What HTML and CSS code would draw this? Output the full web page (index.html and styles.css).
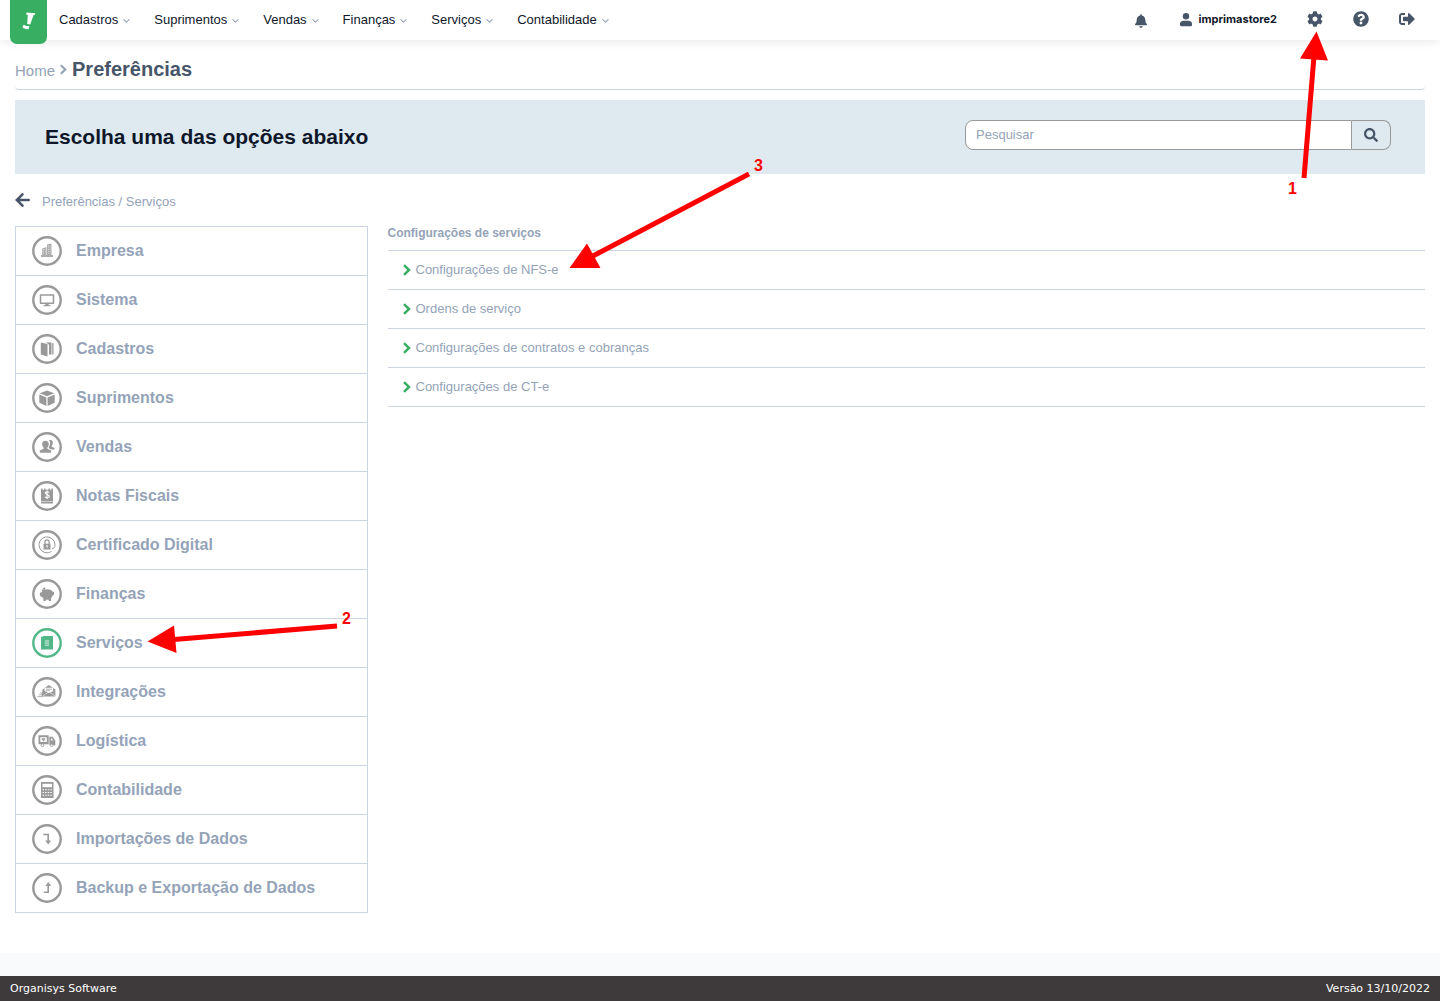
FILE: index.html
```html
<!DOCTYPE html>
<html lang="pt-BR">
<head>
<meta charset="utf-8">
<meta name="viewport" content="width=device-width, initial-scale=1">
<title>Preferências</title>
<link rel="stylesheet" href="styles.css">
</head>
<body>
<svg class="sprite" aria-hidden="true">
  <symbol id="down" viewBox="0 0 8 6"><path d="M1 1.5 4 4.5 7 1.5" fill="none" stroke="currentColor" stroke-width="1.3" stroke-linecap="round"/></symbol>
  <symbol id="next" viewBox="0 0 8 12"><path d="M1 1.2 6 6 1 10.8" fill="none" stroke="currentColor" stroke-width="2.5"/></symbol>
</svg>

<header class="topbar">
  <a class="logo" href="#" aria-label="Início">
    <svg width="14" height="18" viewBox="0 0 14 18" fill="#fff"><path d="M4.400.6 13.200 1.300 12.700 2.900 11.600 3.100 8.200 12.400 5.200 12.100 5.800 3 4.200 2.400Z"/><path d="M.9 13.200 2.500 13.100 4 14 7.300 14 6.800 17 4.200 17.200.7 15.800Z"/></svg>
  </a>
  <nav class="menu" aria-label="Principal">
    <a href="#">Cadastros <svg class="down"><use href="#down"/></svg></a>
    <a href="#">Suprimentos <svg class="down"><use href="#down"/></svg></a>
    <a href="#">Vendas <svg class="down"><use href="#down"/></svg></a>
    <a href="#">Finanças <svg class="down"><use href="#down"/></svg></a>
    <a href="#">Serviços <svg class="down"><use href="#down"/></svg></a>
    <a href="#">Contabilidade <svg class="down"><use href="#down"/></svg></a>
  </nav>
  <div class="tools">
    <button type="button" class="bell" aria-label="Notificações"><svg width="12" height="14" viewBox="0 0 448 512" fill="currentColor"><path d="M224 512c35.3 0 64-28.600 64-64H160c0 35.400 28.600 64 64 64zm215.400-149.700c-19.300-20.800-55.500-52-55.500-154.300 0-77.700-54.500-139.900-127.900-155.200V32c0-17.700-14.300-32-32-32s-32 14.300-32 32v20.800C118.600 68.100 64.100 130.300 64.100 208c0 102.300-36.200 133.500-55.500 154.300-6 6.400-8.700 14.200-8.600 21.700.1 16.400 13 32 32.100 32h383.800c19.100 0 32-15.600 32.100-32 0-7.500-2.600-15.300-8.600-21.700z"/></svg></button>
    <a class="user" href="#"><svg width="12" height="14" viewBox="0 0 12 14" fill="currentColor"><circle cx="6" cy="3.300" r="3.200"/><path d="M3.400 7.700h5.200C10.600 7.700 12 9 12 10.800v1.300c0 .7-.5 1.200-1.200 1.200H1.200C.5 13.300 0 12.800 0 12.100v-1.300C0 9 1.400 7.700 3.400 7.700Z"/></svg><span>imprimastore2</span></a>
    <button type="button" aria-label="Preferências"><svg width="16" height="16" viewBox="0 0 512 512" fill="currentColor"><path d="M487.400 315.700l-42.600-24.600c4.300-23.200 4.300-47 0-70.200l42.600-24.600c4.900-2.800 7.100-8.600 5.500-14-11.100-35.600-30-67.800-54.700-94.600-3.800-4.100-10-5.100-14.800-2.300L380.800 110c-17.900-15.400-38.500-27.300-60.800-35.100V25.800c0-5.600-3.900-10.500-9.400-11.700-36.700-8.200-74.300-7.800-109.200 0-5.500 1.200-9.400 6.100-9.400 11.700V75c-22.200 7.900-42.800 19.800-60.800 35.100L88.700 85.500c-4.900-2.800-11-1.900-14.800 2.300-24.700 26.700-43.600 58.900-54.700 94.600-1.700 5.400.6 11.200 5.500 14L67.300 221c-4.300 23.200-4.300 47 0 70.200l-42.600 24.600c-4.900 2.800-7.100 8.600-5.500 14 11.100 35.600 30 67.800 54.700 94.600 3.800 4.100 10 5.100 14.800 2.300l42.600-24.600c17.900 15.400 38.500 27.300 60.800 35.100v49.200c0 5.600 3.900 10.500 9.400 11.700 36.700 8.200 74.300 7.800 109.200 0 5.500-1.200 9.400-6.100 9.400-11.700v-49.200c22.200-7.900 42.800-19.800 60.800-35.100l42.600 24.600c4.900 2.800 11 1.900 14.800-2.300 24.700-26.700 43.600-58.900 54.700-94.600 1.500-5.500-.7-11.300-5.600-14.100zM256 336c-44.100 0-80-35.900-80-80s35.900-80 80-80 80 35.900 80 80-35.900 80-80 80z"/></svg></button>
    <button type="button" aria-label="Ajuda"><svg width="16" height="16" viewBox="0 0 512 512" fill="currentColor"><path d="M504 256c0 137-111 248-248 248S8 393 8 256C8 119.100 119 8 256 8s248 111.100 248 248zM262.700 90c-54.500 0-89.300 23-116.600 63.800-3.500 5.300-2.400 12.400 2.700 16.200l34.700 26.300c5.200 4 12.600 3 16.700-2.100 17.900-22.700 30.100-35.800 57.300-35.800 20.400 0 45.700 13.100 45.700 33 0 15-12.400 22.700-32.500 34C247.100 238.500 216 254.900 216 296v4c0 6.600 5.400 12 12 12h56c6.600 0 12-5.400 12-12v-1.300c0-28.500 83.200-29.700 83.200-106.700 0-58-60.200-102-116.500-102zM256 338c-25.400 0-46 20.600-46 46s20.600 46 46 46 46-20.600 46-46-20.600-46-46-46z"/></svg></button>
    <button type="button" aria-label="Sair"><svg width="16" height="16" viewBox="0 0 512 512" fill="currentColor"><path d="M497 273L329 441c-15 15-41 4.500-41-17v-96H152c-13.300 0-24-10.700-24-24v-96c0-13.300 10.700-24 24-24h136V88c0-21.400 25.900-32 41-17l168 168c9.300 9.400 9.300 24.600 0 34zM192 436v-40c0-6.600-5.400-12-12-12H96c-17.700 0-32-14.300-32-32V160c0-17.700 14.300-32 32-32h84c6.600 0 12-5.400 12-12V76c0-6.600-5.400-12-12-12H96c-53 0-96 43-96 96v192c0 53 43 96 96 96h84c6.600 0 12-5.400 12-12z"/></svg></button>
  </div>
</header>

<main class="page">
  <div class="crumbs">
    <a href="#">Home</a>
    <svg class="next"><use href="#next"/></svg>
    <h1>Preferências</h1>
  </div>

  <section class="banner">
    <h2>Escolha uma das opções abaixo</h2>
    <form class="search" role="search">
      <input type="text" placeholder="Pesquisar" aria-label="Pesquisar">
      <button type="button" aria-label="Buscar"><svg width="14" height="14" viewBox="0 0 512 512" fill="currentColor"><path d="M505 442.700L405.300 343c-4.500-4.500-10.600-7-17-7H372c27.600-35.300 44-79.700 44-128C416 93.100 322.900 0 208 0S0 93.100 0 208s93.100 208 208 208c48.300 0 92.700-16.400 128-44v16.300c0 6.400 2.500 12.500 7 17l99.700 99.700c9.400 9.400 24.600 9.400 33.900 0l28.300-28.300c9.400-9.400 9.400-24.600.1-34zM208 336c-70.700 0-128-57.200-128-128 0-70.700 57.200-128 128-128 70.700 0 128 57.200 128 128 0 70.700-57.200 128-128 128z"/></svg></button>
    </form>
  </section>

  <div class="path">
    <a href="#" aria-label="Voltar"><svg width="15" height="14" viewBox="0 0 15 14" fill="none" stroke="currentColor" stroke-width="2.500" stroke-linecap="round"><path d="M7.500 1.300 1.800 7l5.700 5.700M2.300 7h11.400"/></svg></a>
    <span>Preferências / Serviços</span>
  </div>

  <div class="columns">
    <ul class="sections">
      <li><a href="#"><svg class="ring" viewBox="0 0 30 30"><circle class="edge" cx="15" cy="15" r="13.700"/><path d="M9 19h12v2H9zM10.200 12.500l4.300-1.500v8h-4.300zM15 8.500 19.500 7.500V19H15z" opacity=".8"/><path d="M11.500 13v5.500M13.200 13v5.500M16.500 9.500V18M18 9.500V18" stroke="#fff" stroke-width=".5" stroke-dasharray="1 .8"/></svg>Empresa</a></li>
      <li><a href="#"><svg class="ring" viewBox="0 0 30 30"><circle class="edge" cx="15" cy="15" r="13.700"/><path d="M8.500 10h13v8.300h-13z" fill="none" stroke="currentColor" stroke-width="1.500" stroke-linejoin="round"/><path d="M13.300 18.500h3.400v1.800h1.800v1h-7v-1h1.800z"/></svg>Sistema</a></li>
      <li><a href="#"><svg class="ring" viewBox="0 0 30 30"><circle class="edge" cx="15" cy="15" r="13.700"/><path d="M8.800 8.500 15.500 10v12.500L8.800 20.500zM14 8.300l5.500.3v12h-2.500v-9.800zM20.200 9h1.300v11.500h-1.300z"/></svg>Cadastros</a></li>
      <li><a href="#"><svg class="ring" viewBox="0 0 30 30"><circle class="edge" cx="15" cy="15" r="13.700"/><path d="m15 7.600 7.200 2.700-7.200 3-7.200-3zM7.300 11.500l7.100 2.900V23l-7.100-3.300zM22.700 11.500l-7.100 2.900V23l7.100-3.300z"/></svg>Suprimentos</a></li>
      <li><a href="#"><svg class="ring" viewBox="0 0 30 30"><circle class="edge" cx="15" cy="15" r="13.700"/><path d="M13.500 8.800c2.200 0 3.300 1.300 3.300 3.300 0 1.400-.6 2.700-1.500 3.600v1.100l3.800 1.700v2.200H7.800v-2.200l3.800-1.700v-1.100c-.9-.9-1.500-2.200-1.500-3.600 0-2 1.200-3.300 3.400-3.300ZM17 8.300c2.800-1 4.200.9 3.800 3.300-.1 1-.6 1.700-1.100 2.200v1l2.800 1.300v1.500h-3.200l-2.500-1.400v-1.300c1.800-2.300 1.700-5 .2-6.600Z"/></svg>Vendas</a></li>
      <li><a href="#"><svg class="ring" viewBox="0 0 30 30"><circle class="edge" cx="15" cy="15" r="13.700"/><path d="M9 7.500h1.500v1.200H12V7.500h1.500v1.200h3V7.500H18v1.200h1.500V7.500H21V20H9zM9 20.500h12v1.900H9z"/><path d="M17.300 11.300c-1-.9-4-.9-4 .7s4 1.300 4 3.200-3 1.900-4.400.7M15.100 9.600v8.400" fill="none" stroke="#fff" stroke-width="1.100"/></svg>Notas Fiscais</a></li>
      <li><a href="#"><svg class="ring" viewBox="0 0 30 30"><circle class="edge" cx="15" cy="15" r="13.700"/><path d="M19.500 21.500A8 8 0 1 1 23 15c0 2.500-1.200 3.500-3 3.500" fill="none" stroke="currentColor" stroke-width="1"/><path d="M11.500 13.700h7V19.500h-7z"/><path d="M12.900 14v-2a2.100 2.100 0 0 1 4.200 0v2" fill="none" stroke="currentColor" stroke-width="1.200"/><path d="M14.500 15h1.100v2.500h-1.100z" fill="#fff"/></svg>Certificado Digital</a></li>
      <li><a href="#"><svg class="ring" viewBox="0 0 30 30"><circle class="edge" cx="15" cy="15" r="13.700"/><path d="M7.900 14 10 12.700l-.2-2.400 2.300.9c2.500-1.600 6.700-1.100 8.400 1.300l1.500.6v2.700l-1.300.5c-.2 1.200-.9 2.200-1.700 2.900v2.700h-2.300v-1.200h-2.900v1.200h-2.400v-2.400l-1.700-1.700-1.800-.7z"/><circle cx="12.200" cy="9.700" r="1.200"/></svg>Finanças</a></li>
      <li class="active"><a href="#" aria-current="page"><svg class="ring" viewBox="0 0 30 30"><circle class="edge" cx="15" cy="15" r="13.700"/><path d="M9 8.800h1.500l1-.9h9.500v13.600H9z"/><path d="M12.800 13h4.300M12.800 15.100h4.300M12.800 17.200h4.300" stroke="#fff" stroke-width=".8"/></svg>Serviços</a></li>
      <li><a href="#"><svg class="ring" viewBox="0 0 30 30"><circle class="edge" cx="15" cy="15" r="13.700"/><path d="M10.500 12.500 16.800 8l6.600 4.500v7H9.800z"/><path d="M12.500 10.800h8.600v3.400L16.800 16l-4.300-2z" fill="#fff"/><path d="M13.800 12.200h6M13.800 13.800h4M5.500 19.600h5M7 17.800h4M8 16h3" stroke="currentColor" stroke-width=".8"/><path d="m11 19 5-3.700h2l5 3.700" fill="none" stroke="#fff" stroke-width=".6"/></svg>Integrações</a></li>
      <li><a href="#"><svg class="ring" viewBox="0 0 30 30"><circle class="edge" cx="15" cy="15" r="13.700"/><path d="M6.500 9.300h10.200v9H6.500zM17.300 10.800h3.200l2.800 3.700v4.800h-6z"/><path d="M8.300 11.200h6.500v4.700H8.300z" fill="#fff"/><path d="m9.500 12.800 1-.8 1 .5 1-.5 1 .8-2 2.600z"/><path d="M18.900 12.400h1l1.300 2h-2.300z" fill="#fff"/><circle cx="10.500" cy="19.300" r="1.300" fill="#fff" stroke="currentColor" stroke-width=".9"/><circle cx="19.700" cy="19.300" r="1.300" fill="#fff" stroke="currentColor" stroke-width=".9"/></svg>Logística</a></li>
      <li><a href="#"><svg class="ring" viewBox="0 0 30 30"><circle class="edge" cx="15" cy="15" r="13.700"/><path d="M9 7h12.500v16H9z"/><path d="M10.500 8.800h9.500v3.400h-9.500z" fill="#fff"/><path d="M10.500 14.800h9.500M10.500 17.500h9.500M10.500 20.200h9.500" stroke="#fff" stroke-width="1" stroke-dasharray="1.500 1.100"/></svg>Contabilidade</a></li>
      <li><a href="#"><svg class="ring" viewBox="0 0 30 30"><circle class="edge" cx="15" cy="15" r="13.700"/><path d="M11.300 10.500h4.900v7" fill="none" stroke="currentColor" stroke-width="1.600"/><path d="M13.300 16.500h5.800l-2.900 4z"/></svg>Importações de Dados</a></li>
      <li><a href="#"><svg class="ring" viewBox="0 0 30 30"><circle class="edge" cx="15" cy="15" r="13.700"/><path d="M11.800 19.300h4.400v-7" fill="none" stroke="currentColor" stroke-width="1.600"/><path d="M13.300 13h5.800l-2.900-4z"/></svg>Backup e Exportação de Dados</a></li>
    </ul>

    <section class="options">
      <h3>Configurações de serviços</h3>
      <ul>
        <li><a href="#"><svg class="next"><use href="#next"/></svg>Configurações de NFS-e</a></li>
        <li><a href="#"><svg class="next"><use href="#next"/></svg>Ordens de serviço</a></li>
        <li><a href="#"><svg class="next"><use href="#next"/></svg>Configurações de contratos e cobranças</a></li>
        <li><a href="#"><svg class="next"><use href="#next"/></svg>Configurações de CT-e</a></li>
      </ul>
    </section>
  </div>
</main>

<footer class="footer">
  <span>Organisys Software</span>
  <span>Versão 13/10/2022</span>
</footer>

<div class="callout step-1">
  <svg width="40" height="150" viewBox="1290 30 40 150"><path d="M1304 178 1314 56" stroke="red" stroke-width="5"/><path d="M1316.500 31.500 1300 58.500l28 2z" fill="red"/></svg>
  <b>1</b>
</div>
<div class="callout step-2">
  <svg width="192" height="36" viewBox="147 620 192 36"><path d="M337 626 174 639.500" stroke="red" stroke-width="5"/><path d="M147.500 641.500 174 625.500l2.500 27.500z" fill="red"/></svg>
  <b>2</b>
</div>
<div class="callout step-3">
  <svg width="182" height="102" viewBox="568 170 182 102"><path d="M749 174 592 256.500" stroke="red" stroke-width="5"/><path d="M569.500 268 587 243.500 600.500 268z" fill="red"/></svg>
  <b>3</b>
</div>
</body>
</html>
```
FILE: styles.css
```css
* { box-sizing: border-box; }

body {
  position: relative;
  display: flex;
  flex-direction: column;
  min-height: 100vh;
  margin: 0;
  background: #f9fafc;
  color: #94a3b8;
  font: 13px/16px "Liberation Sans", Arial, sans-serif;
}

a { color: inherit; text-decoration: none; }
h1, h2, h3, ul { margin: 0; padding: 0; }
ul { list-style: none; }
svg { display: block; flex: none; }
button { padding: 0; border: 0; background: none; color: inherit; font: inherit; cursor: pointer; }
.sprite { position: absolute; width: 0; height: 0; }

/* Top bar */
.topbar {
  position: relative;
  display: flex;
  align-items: flex-start;
  height: 40px;
  padding: 0 25px 0 10px;
  background: #fff;
  box-shadow: 0 1px 10px rgba(0, 0, 0, .1);
}
.logo {
  display: flex;
  align-items: center;
  justify-content: center;
  width: 37px;
  height: 44px;
  padding-bottom: 2px;
  border-radius: 0 0 7px 7px;
  background: #37ae62;
}
.menu { display: flex; gap: 24px; padding: 12px; color: #0f172a; }
.menu a { display: flex; align-items: center; gap: 5px; }
.down { width: 7px; height: 6px; margin-top: 2px; color: #94a3b8; }
.tools {
  display: flex;
  align-items: center;
  gap: 30px;
  height: 38px;
  margin-left: auto;
  color: #475569;
}
.bell { padding-top: 3px; }
.user { display: flex; align-items: center; gap: 7px; margin-left: 3px; }
.user svg { margin-top: 2px; }
.user span { color: #0f172a; font: 700 11px/16px Inter, sans-serif; }

/* Page */
.page { flex: 1; padding: 0 15px 40px; background: #fff; }
.crumbs {
  display: flex;
  align-items: center;
  gap: 5px;
  height: 50px;
  padding-top: 8px;
  border-bottom: 1px solid #cbd5e1;
  border-radius: 4px;
}
.crumbs a { padding-top: 4px; font-size: 15px; }
.crumbs .next { width: 7px; height: 11px; margin-top: 2px; }
.crumbs h1 { color: #475569; font-size: 20px; line-height: 24px; }

.banner {
  display: flex;
  align-items: flex-start;
  justify-content: space-between;
  margin-top: 10px;
  padding: 20px 34px 24px 30px;
  background: #deeaf0;
}
.banner h2 { padding-top: 4px; color: #0f172a; font-size: 21px; line-height: 26px; }
.search { display: flex; flex: 0 1 426px; height: 30px; color: #475569; }
.search input {
  flex: 1;
  min-width: 0;
  padding: 0 10px;
  border: 1px solid #999;
  border-radius: 8px 0 0 8px;
  background: #fff;
  color: #475569;
  font: inherit;
}
.search input::placeholder { color: #94a3b8; opacity: 1; }
.search button {
  display: flex;
  align-items: center;
  justify-content: center;
  width: 39px;
  border: 1px solid #999;
  border-left: 0;
  border-radius: 0 8px 8px 0;
}

.path { display: flex; gap: 12px; padding: 19px 0 16px; }
.path a { color: #475569; }
.path span { padding-top: 1px; }

.columns { display: flex; align-items: flex-start; gap: 20px; }
.sections { flex: 0 0 25%; border: 1px solid #cbd5e1; border-bottom: 0; }
.sections a {
  display: flex;
  align-items: center;
  gap: 14px;
  height: 49px;
  padding-left: 16px;
  border-bottom: 1px solid #cbd5e1;
  font-size: 16px;
  font-weight: bold;
}
.ring { width: 30px; height: 30px; fill: currentColor; color: #999; }
.edge { fill: none; stroke: currentColor; stroke-width: 2.4px; }
.active .ring { color: #52b788; }

.options { flex: 1; }
.options h3 { padding-bottom: 10px; border-bottom: 1px solid #cbd5e1; font-size: 12px; line-height: 14px; }
.options a {
  display: flex;
  align-items: center;
  gap: 5px;
  height: 39px;
  padding-left: 15px;
  border-bottom: 1px solid #cbd5e1;
}
.options .next { width: 8px; height: 12px; color: #37ae62; }

/* Footer */
.footer {
  display: flex;
  align-items: center;
  justify-content: space-between;
  height: 25px;
  margin-top: 23px;
  padding: 1px 10px 0;
  background: #3e3a3b;
  color: #fff;
  font: 11px/14px "DejaVu Sans", Verdana, sans-serif;
}

/* Numbered step arrows laid over the page */
.callout { position: absolute; display: flex; color: red; font-size: 16px; line-height: 18px; pointer-events: none; }
.step-1 { top: 30px; right: 110px; flex-direction: column; }
.step-2 { top: 620px; left: 147px; }
.step-3 { top: 170px; left: 568px; }
.step-1 b { margin-left: -2px; }
.step-2 b { margin: -10px 0 0 3px; }
.step-3 b { margin: -13px 0 0 4px; }
```
